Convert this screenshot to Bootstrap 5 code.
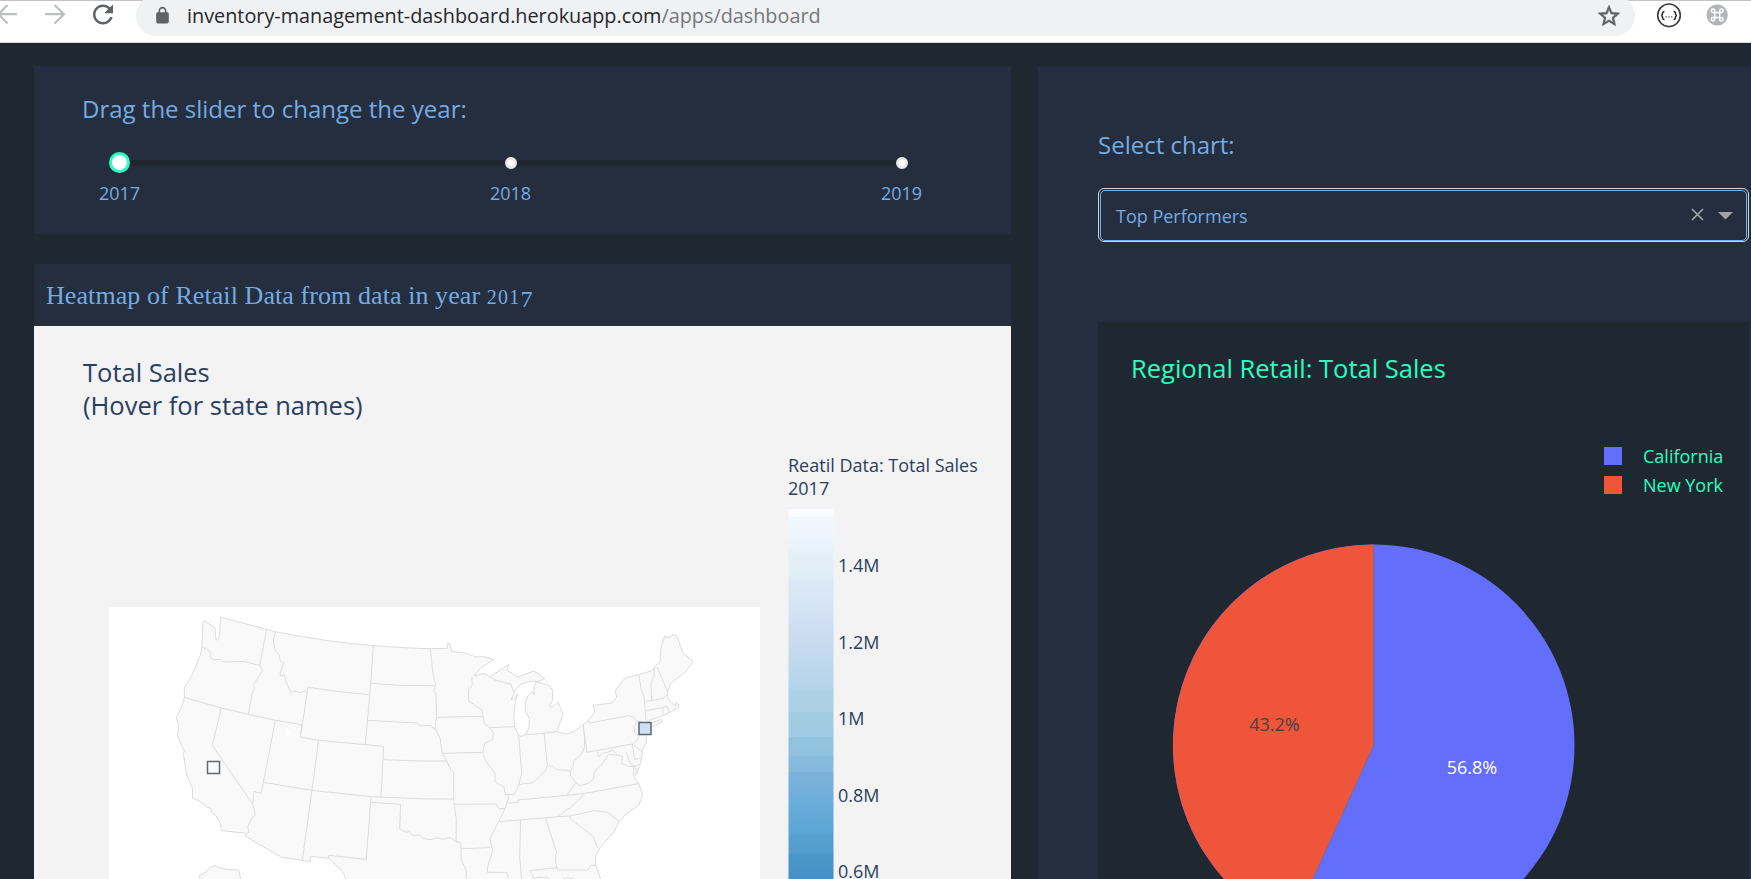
<!DOCTYPE html>
<html lang="en">
<head>
<meta charset="utf-8">
<title>Inventory Management Dashboard</title>
<link href="https://cdn.jsdelivr.net/npm/bootstrap@5.3.0/dist/css/bootstrap.min.css" rel="stylesheet">
<script src="https://cdn.jsdelivr.net/npm/bootstrap@5.3.0/dist/js/bootstrap.bundle.min.js"></script>
<style>
  :root { --page:#1f2630; --panel:#252e3f; --ink:#74abe2; --mint:#2cfec1; }
  html, body { height:100%; overflow:hidden; }
  body { background:#1f2730; color:var(--ink); font-family:"Open Sans",sans-serif; font-size:18px; }
  .toolbar { height:43px; background:#fff; border-top:1px solid #c3c3c4; border-bottom:1px solid #d6dcd8; }
  .toolbar svg { flex:none; display:block; }
  .omnibox { width:1499px; height:41px; margin-top:-6px; border-radius:21px; background:#f0f1f3; padding-left:17px; padding-right:13px; }
  .url { font-size:19.82px; line-height:30px; color:#27282b; margin-left:15px; white-space:nowrap; }
  .url span { color:#75777a; }
  .page-grid { padding:23px 0 0 34px; gap:27px; }
  .left-col { width:977px; gap:30px; }
  .panel { background:var(--panel); }
  .slider-panel { height:168px; padding:26px 0 0 48px; }
  .ctl-label { font-size:24px; line-height:34px; white-space:nowrap; }
  .track { height:6px; width:782px; margin:34px 0 0 38px; background:#1f2630; border-radius:3px; }
  .stop { width:0; }
  .dot { width:12px; height:12px; border-radius:50%; background:#fff; border:3px solid #e9e9e9; flex:none; }
  .dot.on { width:21px; height:21px; border:3px solid var(--mint); margin:-1px 1px 0 0; }
  .marks { width:782px; margin:15px 0 0 37.5px; line-height:24px; }
  .map-head { height:62px; padding:15px 0 0 12px; font-family:"Liberation Serif",serif; font-size:26px; line-height:34px; white-space:nowrap; letter-spacing:.08px; }
  .map-head .oldnum { font-size:20px; letter-spacing:1.2px; }
  .map-head .drop { position:relative; top:3px; font-size:24px; letter-spacing:0; }
  .graph { background:#f3f3f3; height:553px; }
  .graph svg, .pie svg { display:block; }
  .right-col { padding:62px 0 0 60px; height:813px; }
  .picker { width:651px; height:54px; margin-top:26px; border:1px solid #d3d6d6; border-radius:6px; padding:1px 1px 0; }
  .picker-in { border:1px solid #74b0ee; border-radius:5px; padding:0 13px 0 15px; }
  .picker-in span { padding-top:2px; }
  .pie { width:651px; height:557px; margin-top:80px; background:#1f2730; }
  svg text { font-family:"Open Sans",sans-serif; font-size:18px; }
  svg .big { font-size:25.5px; }
  .states path { fill:#f9f9f9; stroke:#dcdcdc; stroke-width:3; stroke-linejoin:round; }
  .states .ln { fill:none; }
  .states .water { fill:#fff; }
</style>
</head>
<body>
<header class="toolbar d-flex">
  <svg width="136" height="41" viewBox="0 1 136 41" fill="none" stroke="#bcbec0" stroke-width="2.2">
    <path d="M-3 14.2H17M7.500 5L-1.500 14.2L7.500 23.500M45 14.200H64M54.500 5L64 14.200L54.500 23.500"/>
    <path transform="translate(88 -.6) scale(1.25)" fill="#5f6368" stroke="none" d="M17.65 6.35C16.2 4.9 14.21 4 12 4c-4.42 0-7.99 3.58-7.99 8s3.57 8 7.99 8c3.73 0 6.84-2.55 7.73-6h-2.08c-.82 2.33-3.04 4-5.65 4-3.31 0-6-2.69-6-6s2.69-6 6-6c1.66 0 3.14.69 4.22 1.78L13 11h7V4l-2.350 2.350z"/>
  </svg>
  <div class="omnibox d-flex align-items-center">
    <svg width="19" height="19" viewBox="0 0 24 24" fill="#5f6368"><path d="M18 8h-1V6c0-2.760-2.240-5-5-5S7 3.240 7 6v2H6c-1.100 0-2 .9-2 2v10c0 1.100.9 2 2 2h12c1.100 0 2-.9 2-2V10c0-1.100-.9-2-2-2zM9 6c0-1.660 1.340-3 3-3s3 1.340 3 3v2H9V6z"/></svg>
    <div class="url">inventory-management-dashboard.herokuapp.com<span>/apps/dashboard</span></div>
    <svg class="ms-auto" width="26" height="26" viewBox="0 0 24 24" fill="#5f6368" stroke="#5f6368" stroke-width=".5"><path d="M22 9.240l-7.190-.62L12 2 9.190 8.630 2 9.240l5.460 4.730L5.820 21 12 17.270 18.180 21l-1.630-7.030L22 9.240zM12 15.400l-3.760 2.270 1-4.280-3.320-2.880 4.380-.38L12 6.100l1.710 4.040 4.380.38-3.320 2.880 1 4.280L12 15.400z"/></svg>
  </div>
  <svg width="116" height="41" viewBox="1635 1 116 41" fill="none">
    <circle cx="1669" cy="15.300" r="11.300" fill="#fff" stroke="#3d3f42" stroke-width="1.600"/>
    <path d="M1664.500 11.500q-2 0-2 2t-1.500 2q1.500 0 1.500 2t2 2M1673.500 11.500q2 0 2 2t1.500 2q-1.500 0-1.500 2t-2 2" stroke="#333" stroke-width="1.600"/>
    <path d="M1665.500 16.800h7" stroke="#555" stroke-width="1.300" stroke-dasharray="1.300 1.500"/>
    <circle cx="1717.200" cy="15" r="10.600" fill="#b3b6b6"/>
    <path d="M1714.700 12.500h5v5h-5zM1714.700 12.500v-1.700a1.700 1.700 0 1 0-1.700 1.700zM1719.700 12.500v-1.700a1.700 1.700 0 1 1 1.700 1.700zM1714.700 17.500v1.700a1.700 1.700 0 1 1-1.700-1.700zM1719.700 17.500v1.700a1.700 1.700 0 1 0 1.700-1.700z" stroke="#fff" stroke-width="1.500"/>
  </svg>
</header>

<main class="page-grid d-flex">
  <section class="left-col d-flex flex-column flex-shrink-0">
    <div class="panel slider-panel">
      <div class="ctl-label">Drag the slider to change the year:</div>
      <div class="track d-flex justify-content-between align-items-center">
        <div class="stop d-flex justify-content-center"><i class="dot on"></i></div>
        <div class="stop d-flex justify-content-center"><i class="dot"></i></div>
        <div class="stop d-flex justify-content-center"><i class="dot"></i></div>
      </div>
      <div class="marks d-flex justify-content-between">
        <div class="stop d-flex justify-content-center"><span>2017</span></div>
        <div class="stop d-flex justify-content-center"><span>2018</span></div>
        <div class="stop d-flex justify-content-center"><span>2019</span></div>
      </div>
    </div>

    <div>
      <div class="panel map-head">Heatmap of Retail Data from data in year <span class="oldnum">201<span class="drop">7</span></span></div>
      <div class="graph">
        <svg width="977" height="553" viewBox="34 326 977 553">
          <defs>
            <linearGradient id="blues" x1="0" y1="509" x2="0" y2="879" gradientUnits="userSpaceOnUse">
              <stop offset="0" stop-color="#fbfcff"/><stop offset=".02" stop-color="#f9fbff"/><stop offset=".022" stop-color="#f2f7ff"/>
              <stop offset=".06" stop-color="#eff6fe"/><stop offset=".105" stop-color="#e9f3fc"/><stop offset=".11" stop-color="#e5f0f8"/>
              <stop offset=".187" stop-color="#dfeef5"/><stop offset=".189" stop-color="#dce8f6"/><stop offset=".285" stop-color="#d3e3f4"/>
              <stop offset=".3" stop-color="#d0dff3"/><stop offset=".345" stop-color="#cbdcf0"/><stop offset=".4" stop-color="#c3d9ee"/>
              <stop offset=".45" stop-color="#b8d6eb"/><stop offset=".485" stop-color="#b4d4e9"/><stop offset=".487" stop-color="#aed1e7"/>
              <stop offset=".548" stop-color="#abcfe5"/><stop offset=".55" stop-color="#a2cce2"/><stop offset=".615" stop-color="#9fcae1"/>
              <stop offset=".617" stop-color="#93c4df"/><stop offset=".668" stop-color="#8fc1de"/><stop offset=".67" stop-color="#86bcdd"/>
              <stop offset=".71" stop-color="#82b9dc"/><stop offset=".712" stop-color="#7cb2d9"/><stop offset=".76" stop-color="#74afdb"/>
              <stop offset=".8" stop-color="#68acda"/><stop offset=".87" stop-color="#5ca5d5"/><stop offset=".88" stop-color="#58a0cf"/>
              <stop offset=".93" stop-color="#539dcd"/><stop offset=".932" stop-color="#4a98ca"/><stop offset="1" stop-color="#4590c6"/>
            </linearGradient>
          </defs>
          <g fill="#2a3f5f">
            <text class="big" x="83" y="381.700">Total Sales</text>
            <text class="big" x="83" y="414.700">(Hover for state names)</text>
            <text x="788" y="472">Reatil Data: Total Sales</text>
            <text x="788" y="495">2017</text>
            <text x="838" y="572">1.4M</text>
            <text x="838" y="649">1.2M</text>
            <text x="838" y="725">1M</text>
            <text x="838" y="802">0.8M</text>
            <text x="838" y="877.500">0.6M</text>
          </g>
          <rect x="788.500" y="509" width="45" height="370" fill="url(#blues)"/>
          <rect x="109" y="607" width="651" height="272" fill="#fff"/>
          <g class="states" transform="translate(100 600) scale(.33333)">
            <!-- mainland outline -->
            <path d="M309 66L314 62L345 84L348 120L353 119L359 105L362 52L500 88L526 95Q680 126 820 137Q930 145 991 146L1042 145V131H1050L1055 154L1095 159L1128 171L1150 170L1182 178L1140 206L1122 228L1152 220L1170 230L1226 194L1221 211L1254 231L1302 213L1335 236L1310 246L1345 255L1358 270L1357 302L1348 318L1357 322L1374 306L1389 342L1370 395L1400 402L1424 394L1450 373L1465 362L1484 337L1480 316L1535 309L1550 292L1546 272L1575 234L1616 224L1662 210L1663 201L1680 185L1684 138L1694 108L1704 114L1719 103L1732 110L1748 158L1779 184L1755 217L1712 250L1702 280L1702 290L1712 306L1728 318L1727 308L1736 312L1734 324L1714 335L1690 346L1645 362L1641 373L1632 395L1639 405V426L1627 453L1624 480L1618 500L1608 526L1608 500L1600 498L1602 530L1616 550L1628 585L1616 617L1580 640L1557 666L1542 695L1500 743L1487 768V795L1502 837L1400 900L900 900L738 837Q730 812 708 795L686 775L632 769L631 784L607 781L545 772L435 708L441 700L364 692L361 670L348 647L334 637L333 626L317 620L307 608L278 594L277 565L260 525L250 460L253 455L233 408L236 376L229 352L244 324L253 294V263L275 228L301 166L306 141Z"/>
            <!-- western borders -->
            <path class="ln" d="M306 141L327 150L332 160V175L345 180L361 178L372 186L407 185L435 185L481 197M500 88L481 186L480 197L488 212L460 254L463 268L458 274L445 343M253 292L364 324L445 343L526 361L606 374M364 324L337 436L458 612M526 361L490 547L484 579H476L462 574L458 612L466 645L455 654L443 681L447 697L441 700M526 95L520 120L525 150L537 164L541 183L551 188L540 222L543 229L553 224L557 242L572 277L588 274L603 278L614 272L620 280M624 262L601 411L656 421L851 439M624 262Q715 276 806 284M820 137L812 250L796 434M606 374L601 411M656 421L607 781M490 547L635 571L813 590L982 597H1062M812 250L900 256L1005 257M803 361L950 369L962 377L990 377L1006 389M851 439L843 590M851 479L960 483H1040M813 590L799 778L686 766L686 775M813 607L902 613L899 686L916 696L928 696L940 707L958 705L972 716L989 719L1010 714L1030 718L1050 713L1068 725H1080"/>
            <!-- midwest and river borders -->
            <path class="ln" d="M991 146L998 214L1007 257L1001 272L1008 282L1009 349L1005 385L1020 415L1027 460L1042 486L1050 505L1060 516L1062 613L1069 656L1068 725L1082 730L1084 778L1100 816L1098 837M1009 352L1149 349M1027 460L1145 457M1149 349L1148 332L1106 303V268L1116 258V231M1168 230L1185 240L1215 248L1232 252L1242 276M1149 349L1154 372L1169 383L1180 400L1178 418L1154 430L1148 460L1158 485L1185 520L1185 545L1212 561L1216 585L1225 583V598L1215 626H1197L1188 612L1062 613M1215 626L1199 660L1182 692L1170 718L1178 752L1162 803V817H1220L1226 837M1082 746L1170 743M1169 383L1246 380M1256 406L1265 520L1257 552L1250 570L1240 584L1225 583M1332 398L1342 497L1335 514L1307 542L1292 550L1275 550L1257 555M1256 406L1332 400L1370 395M1342 497L1360 499L1370 509L1402 511L1410 515L1420 500L1420 485L1445 462L1453 443L1454 417L1450 373M1410 515L1413 530L1428 548L1440 557L1465 550L1480 537L1482 520L1496 500L1505 494L1527 462L1550 466M1428 548L1400 586L1254 600V607L1225 609M1400 586L1450 581L1615 551M1197 665L1378 650L1410 648L1482 632L1523 637L1558 665M1450 583L1440 597L1410 625L1400 628L1376 650M1262 660L1259 770L1265 837M1337 655L1369 755L1366 780L1372 810L1465 810L1473 795L1487 797M1372 803L1290 812L1302 837M1410 648L1412 658L1455 690L1480 710L1492 743"/>
            <!-- eastern borders -->
            <path class="ln" d="M1449 374L1461 457L1597 432M1465 362L1468 369L1587 347L1602 352L1610 364L1640 368M1610 364L1602 382L1604 397L1617 410L1607 425L1597 432L1627 455M1597 432L1604 478L1624 475M1492 454L1495 471L1508 460L1526 456L1537 450L1552 464L1568 470L1565 490L1585 499L1600 500M1580 457L1590 490L1607 499L1617 492M1616 224L1624 270L1632 288L1638 362M1663 201L1662 232L1653 250L1655 300M1671 200L1703 276M1638 304L1690 295L1701 285M1638 332L1688 323L1700 318L1708 335M1688 323L1690 346"/>
            <path d="M1645 380L1655 368L1685 358L1688 365L1650 383Z"/>
            <!-- lakes -->
            <path class="water" d="M1234 298L1248 267L1262 253L1290 244H1309L1303 260L1302 285L1297 275L1283 288L1276 306V333L1288 355L1287 382L1278 402L1265 409L1255 406L1245 380L1241 352L1246 308L1253 280L1244 297Z"/>
            <path style="fill:#fff;stroke:none" d="M555 380L570 392L571 411L559 406Z"/>
            <!-- Alaska -->
            <path d="M304 845L297 828L318 816L330 802L347 796L354 802L381 808L416 810L423 840Z"/>
            <path class="ln" d="M1300 835Q1330 828 1350 837M1390 837L1400 833L1420 837"/>
          </g>
          <rect x="207.500" y="761.500" width="12" height="12" fill="#fafafa" stroke="#64686c" stroke-width="1.500"/>
          <rect x="639" y="722.500" width="12" height="12" fill="#cfe0f3" stroke="#5b6870" stroke-width="1.500"/>
        </svg>
      </div>
    </div>
  </section>

  <section class="panel right-col flex-grow-1">
    <div class="ctl-label">Select chart:</div>
    <div class="picker">
      <div class="picker-in h-100 d-flex align-items-center">
        <span>Top Performers</span>
        <svg class="ms-auto" width="46" height="24" viewBox="0 0 46 24">
          <path d="M5 5L16 16M16 5L5 16" stroke="#a3a3a3" stroke-width="1.700"/>
          <path d="M31 8H46L38.500 15.500Z" fill="#a3a3a3"/>
        </svg>
      </div>
    </div>
    <div class="pie">
      <svg width="651" height="557" viewBox="1098 322 651 557">
        <g fill="#2cfec1">
          <text class="big" x="1131" y="378">Regional Retail: Total Sales</text>
          <text x="1643" y="463">California</text>
          <text x="1643" y="492">New York</text>
        </g>
        <rect x="1604" y="447" width="18" height="18" fill="#636efa"/>
        <rect x="1604" y="476" width="18" height="18" fill="#ef553b"/>
        <circle cx="1373.700" cy="745.300" r="200.800" fill="#636efa"/>
        <path d="M1373.700 745.300V544.500A200.800 200.800 0 0 0 1290.500 928Z" fill="#ef553b"/>
        <path d="M1373.700 544.500V745.300L1290.500 928" fill="none" stroke="#7a6b77" stroke-width=".7"/>
        <g text-anchor="middle">
          <text x="1274.500" y="731" fill="#444">43.2%</text>
          <text x="1472" y="774" fill="#fff">56.8%</text>
        </g>
      </svg>
    </div>
  </section>
</main>
</body>
</html>
